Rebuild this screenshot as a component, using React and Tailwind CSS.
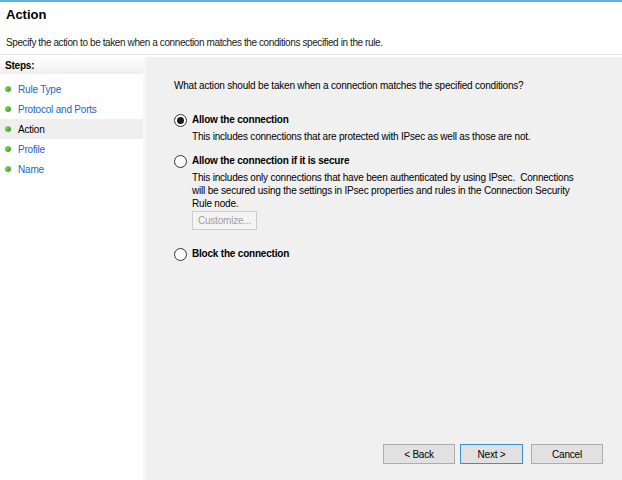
import React from "react";

const steps = [
  { label: "Rule Type", active: false },
  { label: "Protocol and Ports", active: false },
  { label: "Action", active: true },
  { label: "Profile", active: false },
  { label: "Name", active: false },
];

const Radio = ({ checked }) => (
  <span className="flex h-[13px] w-[13px] shrink-0 items-center justify-center rounded-full border border-[#333] bg-white">
    {checked && <span className="h-[7px] w-[7px] rounded-full bg-[#1a1a1a]"></span>}
  </span>
);

const Btn = ({ children, focus, extra = "" }) => (
  <button
    className={
      "flex h-[20px] items-center justify-center border bg-[#e1e1e1] text-[10px] text-black " +
      (focus ? "w-[63px] border-[#3c8fd6] " : "w-[72px] border-[#adadad] ") +
      extra
    }
  >
    {children}
  </button>
);

const App = () => {
  return (
    <div
      className="flex h-[480px] w-[622px] flex-col overflow-hidden bg-white text-[10px] tracking-[-0.2px] text-black"
      style={{ fontFamily: "'Liberation Sans', Arial, sans-serif" }}
    >
      <div className="h-[2px] bg-[#5ab4dd]"></div>
      <div className="h-[53px] border-b border-[#e8e8e8] px-[6px] pt-[4px]">
        <h1 className="text-[13px] font-bold leading-[18px] tracking-normal">Action</h1>
        <p className="mt-[12px] leading-[14px] tracking-[-0.4px] text-[#1a1a1a]">
          Specify the action to be taken when a connection matches the conditions specified in the rule.
        </p>
      </div>
      <div className="flex flex-1 pt-[2px]">
        <div className="w-[146px] border-r-[3px] border-[#f7f7f7] bg-white">
          <div className="flex h-[17px] items-center bg-gradient-to-b from-white to-[#eeeeee] px-[5px] font-bold">
            Steps:
          </div>
          <div className="pt-[5px]">
            {steps.map((s) => (
              <div
                key={s.label}
                className={
                  "flex h-[20px] items-center gap-[7px] pl-[5px] " +
                  (s.active ? "bg-[#efefef] text-black" : "text-[#1b64c8]")
                }
              >
                <span className="h-[6px] w-[6px] rounded-full bg-gradient-to-br from-[#8fdc6a] to-[#2f9a1a]"></span>
                <span>{s.label}</span>
              </div>
            ))}
          </div>
        </div>
        <div className="flex flex-1 flex-col bg-[#f0f0f0] pb-[16px] pl-[28px] pr-[19px] pt-[22px]">
          <p className="leading-[14px]">
            What action should be taken when a connection matches the specified conditions?
          </p>
          <div className="mt-[20px]">
            <div className="flex items-center gap-[5px]">
              <Radio checked />
              <span className="font-bold leading-[14px]">Allow the connection</span>
            </div>
            <p className="mt-[3px] pl-[18px] leading-[13px]">
              This includes connections that are protected with IPsec as well as those are not.
            </p>
            <div className="mt-[11px] flex items-center gap-[5px]">
              <Radio />
              <span className="font-bold leading-[14px]">Allow the connection if it is secure</span>
            </div>
            <p className="mt-[3px] pl-[18px] pr-[20px] leading-[13px]">
              This includes only connections that have been authenticated by using IPsec.&nbsp; Connections will be
              secured using the settings in IPsec properties and rules in the Connection Security Rule node.
            </p>
            <div className="mt-[1px] pl-[18px]">
              <button className="flex h-[19px] w-[65px] items-center justify-center border border-[#cccccc] bg-[#f4f4f4] text-[10px] text-[#a0a0a0]">
                Customize...
              </button>
            </div>
            <div className="mt-[17px] flex items-center gap-[5px]">
              <Radio />
              <span className="font-bold leading-[14px]">Block the connection</span>
            </div>
          </div>
          <div className="mt-auto flex justify-end gap-[5px]">
            <Btn>&lt; Back</Btn>
            <Btn focus>Next &gt;</Btn>
            <Btn extra="ml-[3px]">Cancel</Btn>
          </div>
        </div>
      </div>
    </div>
  );
};

export default App;
